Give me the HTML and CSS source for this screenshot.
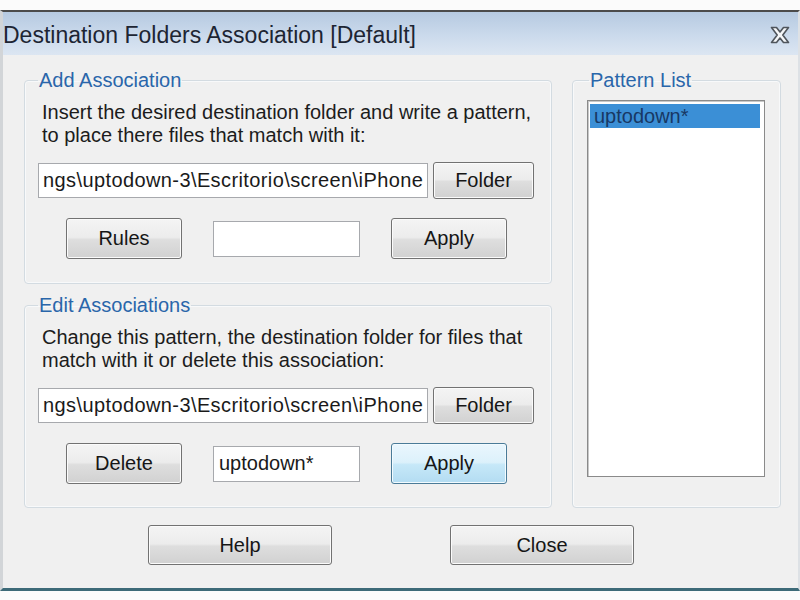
FILE: index.html
```html
<!DOCTYPE html>
<html lang="en">
<head>
<meta charset="utf-8">
<title>Destination Folders Association [Default]</title>
<link rel="stylesheet" href="styles.css">
</head>
<body>
<div class="screen">
  <div class="window">
    <div class="titlebar">
      <span class="title">Destination Folders Association [Default]</span>
      <svg class="close" width="20" height="18" viewBox="0 0 20 18" aria-label="Close">
        <polygon points="1.5,1.5 6.5,1.5 10,6 13.5,1.5 18.5,1.5 12.8,9 18.5,16.5 13.5,16.5 10,12 6.5,16.5 1.5,16.5 7.2,9" fill="#f4f6f8" stroke="#4f555c" stroke-width="1.6" stroke-linejoin="round"/>
      </svg>
    </div>
    <div class="content">
      <div class="columns">
        <div class="left">
          <fieldset class="group">
            <legend>Add Association</legend>
            <p class="desc">Insert the desired destination folder and write a pattern,<br>to place there files that match with it:</p>
            <div class="row-path">
              <input class="path" type="text" readonly value="ngs\uptodown-3\Escritorio\screen\iPhone">
              <button class="btn btn-folder" type="button">Folder</button>
            </div>
            <div class="row-actions">
              <button class="btn btn-small" type="button">Rules</button>
              <input class="pattern" type="text" readonly value="">
              <button class="btn btn-small" type="button">Apply</button>
            </div>
          </fieldset>
          <fieldset class="group group-edit">
            <legend>Edit Associations</legend>
            <p class="desc">Change this pattern, the destination folder for files that<br>match with it or delete this association:</p>
            <div class="row-path">
              <input class="path" type="text" readonly value="ngs\uptodown-3\Escritorio\screen\iPhone">
              <button class="btn btn-folder" type="button">Folder</button>
            </div>
            <div class="row-actions">
              <button class="btn btn-small" type="button">Delete</button>
              <input class="pattern" type="text" readonly value="uptodown*">
              <button class="btn btn-small btn-hot" type="button">Apply</button>
            </div>
          </fieldset>
        </div>
        <fieldset class="group group-list">
          <legend>Pattern List</legend>
          <div class="listbox">
            <div class="item selected">uptodown*</div>
          </div>
        </fieldset>
      </div>
      <div class="actions">
        <button class="btn btn-wide" type="button">Help</button>
        <button class="btn btn-wide" type="button">Close</button>
      </div>
    </div>
  </div>
</div>
</body>
</html>
```
FILE: styles.css
```css
html, body {
  margin: 0;
  padding: 0;
  background: #fbfbfb;
  font-family: "Liberation Sans", Arial, sans-serif;
  color: #1a1a1a;
}

.screen {
  padding-top: 10px;
  width: 800px;
}

.window {
  width: 800px;
  box-sizing: border-box;
  border-top: 2px solid #4b4b4b;
  border-left: 3px solid #d2d5d8;
  border-right: 2px solid #dde1e5;
  border-bottom: 3px solid #3d6a78;
}

.titlebar {
  height: 43px;
  box-sizing: border-box;
  padding-top: 10px;
  display: flex;
  justify-content: space-between;
  align-items: flex-start;
  background: linear-gradient(to bottom, #b6cae1 0%, #cbdaec 55%, #dce6f2 100%);
}

.title {
  font-size: 23px;
  line-height: 26px;
  color: #1d2533;
  white-space: nowrap;
}

.close {
  margin-top: 4px;
  margin-right: 8px;
}

.content {
  background: #f0f0f0;
  padding: 14px 0 23px 21px;
}

.columns {
  display: flex;
  gap: 20px;
  align-items: stretch;
}

.left {
  width: 528px;
  display: flex;
  flex-direction: column;
}

.group {
  margin: 0;
  min-width: 0;
  padding: 10px 13px 24px 13px;
  border: 1px solid #d3dbe1;
  border-radius: 4px;
  box-shadow: inset 0 0 0 1px #f8f9fa;
}

.group legend {
  padding: 0 1px;
  font-size: 20px;
  line-height: 22px;
  color: #2a66aa;
}

.group-edit {
  margin-top: 10px;
  padding-bottom: 23px;
}

.desc {
  margin: 0 0 0 4px;
  font-size: 20px;
  line-height: 23px;
  color: #1c1c1c;
}

.row-path {
  display: flex;
  align-items: center;
  gap: 5px;
  height: 37px;
  margin-top: 15px;
}

.row-actions {
  display: flex;
  align-items: center;
  gap: 31px;
  height: 41px;
  margin: 19px 0 0 28px;
}

input {
  font-family: "Liberation Sans", Arial, sans-serif;
  font-size: 20px;
  color: #1a1a1a;
  background: #ffffff;
  border: 1px solid #a7a9ad;
  outline: none;
  margin: 0;
  box-sizing: border-box;
}

.path {
  width: 390px;
  height: 35px;
  padding: 0 3px 0 4px;
  letter-spacing: 0.4px;
}

.pattern {
  width: 147px;
  height: 36px;
  padding: 0 4px 0 5px;
}

.btn {
  font-family: "Liberation Sans", Arial, sans-serif;
  font-size: 20px;
  color: #161616;
  margin: 0;
  padding: 0;
  box-sizing: border-box;
  border: 1px solid #727272;
  border-radius: 3px;
  background: linear-gradient(to bottom, #f4f4f4 0%, #ececec 47%, #dedede 53%, #d1d1d1 100%);
  box-shadow: inset 0 0 0 1px #fbfbfb;
}

.btn-folder {
  width: 101px;
  height: 37px;
}

.btn-small {
  width: 116px;
  height: 41px;
}

.btn-hot {
  border-color: #4a7b98;
  background: linear-gradient(to bottom, #eaf6fd 0%, #dcf1fb 47%, #c6e8f8 53%, #b3dcf2 100%);
  box-shadow: inset 0 0 0 1px #f2fbff;
}

.group-list {
  width: 209px;
  box-sizing: border-box;
  padding: 9px 15px 0 14px;
}

.group-list legend {
  margin-left: 2px;
}

.listbox {
  height: 377px;
  box-sizing: border-box;
  background: #ffffff;
  border: 1px solid #8a8a8a;
  box-shadow: inset 1px 1px 0 #c8c8c8;
  padding: 3px 4px 0 2px;
}

.item {
  height: 24px;
  line-height: 24px;
  font-size: 20px;
  padding-left: 4px;
  color: #183864;
}

.item.selected {
  background: #3b8fd6;
}

.actions {
  display: flex;
  gap: 118px;
  margin-top: 17px;
  padding-left: 124px;
}

.btn-wide {
  width: 184px;
  height: 40px;
}
```
